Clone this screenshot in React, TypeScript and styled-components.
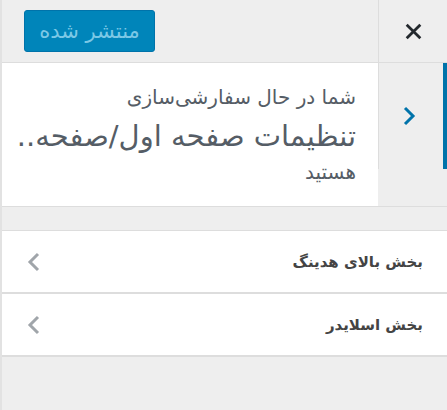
import React from 'react'
import styled, { createGlobalStyle } from 'styled-components'

const GlobalStyle = createGlobalStyle`
   html, body {
      margin: 0;
      padding: 0;
      background: #eeeeee;
   }
   * {
      box-sizing: border-box;
   }
`

const sections = ['بخش بالای هدینگ', 'بخش اسلایدر']

const App: React.FC = () => {
   return (
      <>
         <GlobalStyle />
         <Pane dir="rtl">
            <Header>
               <CloseButton aria-label="بستن">
                  <svg width="17" height="17" viewBox="0 0 16 16">
                     <path
                        d="M2.5 2.5 L13.5 13.5 M13.5 2.5 L2.5 13.5"
                        stroke="#23282d"
                        strokeWidth="2.6"
                        strokeLinecap="square"
                     />
                  </svg>
               </CloseButton>
               <HeaderActions>
                  <PublishButton disabled>منتشر شده</PublishButton>
               </HeaderActions>
            </Header>

            <InfoSection>
               <BackButton aria-label="بازگشت">
                  <svg width="14" height="22" viewBox="0 0 14 22">
                     <path
                        d="M3 3 L11 11 L3 19"
                        fill="none"
                        stroke="#0073aa"
                        strokeWidth="3"
                     />
                  </svg>
               </BackButton>
               <InfoText>
                  <Notice>شما در حال سفارشی‌سازی</Notice>
                  <PanelTitle>تنظیمات صفحه اول/صفحه..</PanelTitle>
                  <Notice $spaced>هستید</Notice>
               </InfoText>
            </InfoSection>

            <SectionList>
               {sections.map((title) => (
                  <SectionRow key={title}>
                     <SectionTitle>{title}</SectionTitle>
                     <svg width="14" height="22" viewBox="0 0 14 22">
                        <path
                           d="M11 3 L3 11 L11 19"
                           fill="none"
                           stroke="#a0a5aa"
                           strokeWidth="3"
                        />
                     </svg>
                  </SectionRow>
               ))}
            </SectionList>
         </Pane>
      </>
   )
}

export default App

const Pane = styled.div`
   width: 447px;
   height: 410px;
   background: #eeeeee;
   border-left: 2px solid #e2e2e2;
   font-family: 'DejaVu Sans', 'Noto Sans', sans-serif;
   overflow: hidden;
`

const Header = styled.div`
   display: flex;
   height: 63px;
   border-bottom: 1px solid #dddddd;
`

const CloseButton = styled.button`
   width: 69px;
   height: 62px;
   display: flex;
   align-items: center;
   justify-content: center;
   background: #eeeeee;
   border: 0;
   border-left: 1px solid #dddddd;
   padding: 0;
   cursor: pointer;
`

const HeaderActions = styled.div`
   flex: 1;
   display: flex;
   align-items: flex-start;
   justify-content: flex-end;
   padding: 10px 0 0 22px;
`

const PublishButton = styled.button`
   width: 131px;
   height: 42px;
   padding: 0;
   background: #0085ba;
   border: 1px solid #0073aa;
   border-radius: 3px;
   color: #7cc8e6;
   font-family: 'DejaVu Sans', sans-serif;
   font-size: 21px;
   line-height: 40px;
   cursor: default;
`

const InfoSection = styled.div`
   display: flex;
   align-items: flex-start;
   border-bottom: 1px solid #dddddd;
   margin-bottom: 23px;
`

const BackButton = styled.button`
   width: 69px;
   height: 106px;
   display: flex;
   align-items: center;
   justify-content: center;
   background: #eeeeee;
   border: 0;
   border-right: 4px solid #0073aa;
   border-left: 1px solid #dddddd;
   padding: 0 4px 0 0;
   cursor: pointer;
`

const InfoText = styled.div`
   flex: 1;
   background: #ffffff;
   padding: 22px 22px 22px 10px;
   color: #555d66;
`

const Notice = styled.div<{ $spaced?: boolean }>`
   font-size: 20px;
   line-height: 24px;
   margin-top: ${(p) => (p.$spaced ? '8px' : '0')};
`

const PanelTitle = styled.div`
   font-size: 29px;
   line-height: 32px;
   margin-top: 11px;
   white-space: nowrap;
`

const SectionList = styled.div`
   border-top: 1px solid #dddddd;
`

const SectionRow = styled.div`
   display: flex;
   align-items: center;
   justify-content: space-between;
   height: 63px;
   padding: 0 24px 0 25px;
   background: #ffffff;
   border-bottom: 2px solid #dddddd;
`

const SectionTitle = styled.span`
   font-size: 15px;
   font-weight: bold;
   color: #444444;
`
